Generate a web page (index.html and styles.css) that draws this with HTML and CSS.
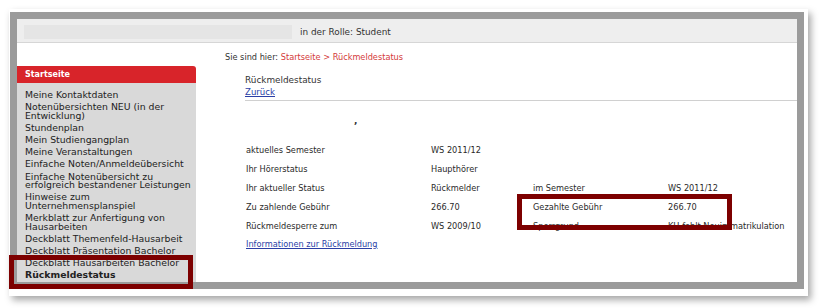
FILE: index.html
```html
<!DOCTYPE html>
<html lang="de">
<head>
  <meta charset="UTF-8">
  <title>Rückmeldestatus</title>
  <link rel="stylesheet" href="styles.css">
</head>
<body>
  <div class="frame">
    <div class="window">
      <header class="topbar">
        <div class="topbar-box"></div>
        <span class="role">in der Rolle: Student</span>
      </header>

      <div class="layout">
        <nav class="sidebar">
          <div class="side-head">Startseite</div>
          <ul class="side-list">
            <li>Meine Kontaktdaten</li>
            <li>Notenübersichten NEU (in der Entwicklung)</li>
            <li>Stundenplan</li>
            <li>Mein Studiengangplan</li>
            <li>Meine Veranstaltungen</li>
            <li>Einfache Noten/Anmeldeübersicht</li>
            <li>Einfache Notenübersicht zu erfolgreich bestandener Leistungen</li>
            <li>Hinweise zum Unternehmensplanspiel</li>
            <li>Merkblatt zur Anfertigung von Hausarbeiten</li>
            <li>Deckblatt Themenfeld-Hausarbeit</li>
            <li>Deckblatt Präsentation Bachelor</li>
            <li>Deckblatt Hausarbeiten Bachelor</li>
            <li class="active">Rückmeldestatus</li>
          </ul>
        </nav>

        <main class="content">
          <p class="crumbs">Sie sind hier: <span class="crumb-link">Startseite &gt; Rückmeldestatus</span></p>
          <div class="title-block">
            <div class="title">Rückmeldestatus</div>
            <a class="back" href="#">Zurück</a>
          </div>
          <div class="mark">,</div>
          <div class="status">
            <span>aktuelles Semester</span><span>WS 2011/12</span><span></span><span></span>
            <span>Ihr Hörerstatus</span><span>Haupthörer</span><span></span><span></span>
            <span>Ihr aktueller Status</span><span>Rückmelder</span><span>im Semester</span><span>WS 2011/12</span>
            <span>Zu zahlende Gebühr</span><span>266.70</span><span>Gezahlte Gebühr</span><span>266.70</span>
            <span>Rückmeldesperre zum</span><span>WS 2009/10</span><span>Sperrgrund</span><span>KH fehlt Neuimmatrikulation</span>
          </div>
          <a class="info" href="#">Informationen zur Rückmeldung</a>
        </main>
      </div>
    </div>
  </div>

  <div class="highlight hl-side"></div>
  <div class="highlight hl-fee"></div>
</body>
</html>
```

FILE: styles.css
```css
body {
  margin: 0;
  background: #fff;
  font-family: "DejaVu Sans", Verdana, sans-serif;
  color: #333;
  position: relative;
  width: 823px;
  height: 308px;
  overflow: hidden;
}
.frame {
  margin: 9px 0 0 9px;
  width: 794px;
  height: 280px;
  padding: 3px 4px 4px 1px;
  background: #fff;
  box-shadow: 3px 4px 7px rgba(0,0,0,0.35);
}
.window {
  height: 263px;
  border: 7px solid #9b9b9b;
  background: #fff;
  overflow: hidden;
  display: flex;
  flex-direction: column;
}
.topbar {
  height: 23px;
  background: #eee;
  border-bottom: 1px solid #d6d6d6;
  display: flex;
  align-items: center;
  padding-left: 7px;
  flex-shrink: 0;
}
.topbar-box {
  width: 268px;
  height: 14px;
  margin-top: 2px;
  background: #e5e5e5;
}
.role {
  margin-left: 8px;
  font-size: 8.9px;
  margin-top: 2px;
}
.layout {
  flex: 1;
  display: flex;
}
.sidebar {
  width: 179px;
  padding-top: 23px;
  display: flex;
  flex-direction: column;
}
.side-head {
  height: 17px;
  background: #d8242a;
  border-radius: 0 3px 0 0;
  color: #fff;
  font-weight: bold;
  font-size: 8px;
  line-height: 17px;
  padding-left: 8px;
}
.side-list {
  flex: 1;
  list-style: none;
  margin: 0;
  padding: 8px 2px 0 8px;
  background: #d9d9d9;
  font-size: 9.3px;
  line-height: 8.5px;
  color: #222;
}
.side-list li {
  margin-bottom: 3.7px;
}
.side-list .active {
  font-weight: bold;
}
.content {
  flex: 1;
  position: relative;
}
.crumbs {
  margin: 9px 0 0 29px;
  font-size: 8.2px;
  line-height: 10px;
}
.crumb-link {
  color: #d43a3a;
}
.title-block {
  margin: 12px 0 0 49px;
  padding-bottom: 2px;
  border-bottom: 1px solid #d0d0d0;
}
.title {
  font-size: 8.9px;
  line-height: 12px;
}
.back, .info {
  color: #2b3fa6;
  font-size: 8.6px;
}
.back {
  display: block;
  line-height: 12px;
}
.mark {
  margin: 15px 0 0 158px;
  font-weight: bold;
  font-size: 9px;
  line-height: 10px;
}
.status {
  margin: 14px 0 0 50px;
  display: grid;
  grid-template-columns: 185px 102px 135px auto;
  grid-auto-rows: 19.2px;
  align-items: center;
  font-size: 8.2px;
  color: #2a2a2a;
}
.info {
  display: block;
  margin: 3px 0 0 50px;
  font-size: 8.2px;
}
.highlight {
  position: absolute;
  border: 5px solid #7d0000;
}
.hl-side {
  left: 9px;
  top: 255px;
  width: 174px;
  height: 24px;
}
.hl-fee {
  left: 517px;
  top: 194px;
  width: 205px;
  height: 26px;
}
```
